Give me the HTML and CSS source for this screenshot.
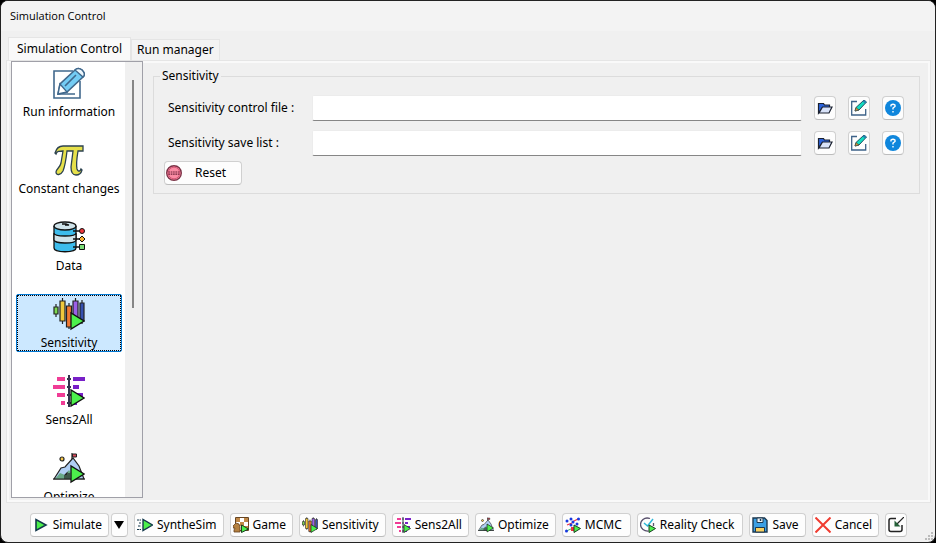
FILE: index.html
```html
<!DOCTYPE html>
<html lang="en">
<head>
    <meta charset="UTF-8">
    <meta name="viewport" content="width=device-width, initial-scale=1.0">
    <title>Simulation Control</title>
    <link rel="stylesheet" href="styles.css">
</head>
<body>

    <!-- Shared icons -->
    <svg class="sprite" aria-hidden="true">
        <symbol id="run-info" viewBox="0 0 32 32">
            <path d="M20 4H1v27h26V14" fill="none" stroke="#40688c" stroke-width="1.6"/>
            <path d="M5 27l2-10L22 3q3-3 7 0 4 4 1 7L14 25z" fill="#74ccf4" stroke="#40688c" stroke-width="1.6"/>
            <path d="M22 3q3-3 7 0 4 4 1 7z" fill="#eef7fc" stroke="#40688c" stroke-width="1.4"/>
            <path d="M5 27l2-10 7 8z" fill="#fff" stroke="#40688c" stroke-width="1.4"/>
            <path d="M12 19L23 8M5 27h17" fill="none" stroke="#40688c" stroke-width="1.6"/>
        </symbol>
        <symbol id="pi" viewBox="0 0 32 32">
            <path d="M2 9Q4 2 10 2h20v5h-5c-1 6-2 13-1 18 1 3 3 3 4 0l1 1c-1 4-4 5-6 5-5 0-5-5-5-8l2-16h-6c-1 9-2 15-4 20-2 4-7 5-7 1 0-3 4-4 5-9l2-12c-4 0-6 0-7 3z" fill="#e6e04a" stroke="#2c4250" stroke-width="1.3"/>
        </symbol>
        <symbol id="data" viewBox="0 0 32 32">
            <path d="M1 5v22c0 5 22 5 22 0V5" fill="#3dbcec" stroke="#111" stroke-width="1.3"/>
            <path d="M1 12c0 4 22 4 22 0v7c0 4-22 4-22 0z" fill="#cfe3ea" stroke="#111" stroke-width="1.3"/>
            <ellipse cx="12" cy="5" rx="11" ry="4" fill="#cfe3ea" stroke="#111" stroke-width="1.3"/>
            <path d="M9 3h4l3 1h-4M20 10h8M20 18h8M20 26h8" fill="none" stroke="#111" stroke-width="1.3"/>
            <circle cx="29" cy="10" r="2.5" fill="#f0383c" stroke="#111"/>
            <path d="M29 15l3 3-3 3-3-3z" fill="#f8b030" stroke="#111"/>
            <path d="M26.5 23.5h5v5h-5z" fill="#7bdc78" stroke="#111"/>
        </symbol>
        <symbol id="bars" viewBox="0 0 32 32">
            <g stroke="#222" stroke-width="1.2">
                <path d="M3 6v13M9.5 0v26M16 5v26M22.5 0v24M29 2v24"/>
                <path d="M1 9h4v7H1z" fill="#7cd850"/>
                <path d="M7 3h5v20H7z" fill="#f0c83c"/>
                <path d="M13.5 8h5v21h-5z" fill="#f07830"/>
                <path d="M20 3h5v19h-5z" fill="#9b60e8"/>
                <path d="M27 5h4v18h-4z" fill="#3450b0"/>
            </g>
            <path d="M18 15v16l13-8z" fill="#4cf04c" stroke="#111" stroke-width="1.3"/>
        </symbol>
        <symbol id="tornado" viewBox="0 0 32 32">
            <path d="M4 4h8M0 12h12M4 20h8M8 28h4" stroke="#f03c96" stroke-width="4"/>
            <path d="M20 4h12M20 12h6M20 20h10M20 28h4" stroke="#7820c8" stroke-width="4"/>
            <path d="M16 0v32M14 4h4M14 12h4M14 20h4M14 28h4" stroke="#34344c" stroke-width="2"/>
            <path d="M18 15v16l13-8z" fill="#4cf04c" stroke="#111" stroke-width="1.3"/>
        </symbol>
        <symbol id="mountain" viewBox="0 0 32 32">
            <path d="M1 27l7-11 4-1 8-9 6 8 5 13z" fill="#b0cef4" stroke="#222" stroke-width="1.2"/>
            <path d="M2 27l5-6 5 2 4-5 3 5 10 4z" fill="#68a888"/>
            <path d="M12 27v-4l2-2v6M16 27v-6M0 27h32M19 7V1" fill="none" stroke="#222" stroke-width="1.2"/>
            <path d="M19.5 2h4v3h-4z" fill="#d84858" stroke="#222"/>
            <circle cx="9" cy="7" r="2" fill="#f8c848" stroke="#222" stroke-width="1.2"/>
            <path d="M18 14v16l13-8z" fill="#4cf04c" stroke="#111" stroke-width="1.3"/>
        </symbol>
        <symbol id="folder" viewBox="0 0 16 16">
            <path d="M1.5 13V3.500h5l1 1.500h5v3H5z" fill="#2a62dc" stroke="#1c2230" stroke-width="1.2"/>
            <path d="M2 13l3.500-6H15l-3 6z" fill="#d8e2f8" stroke="#1c2230" stroke-width="1.2"/>
        </symbol>
        <symbol id="edit" viewBox="0 0 16 16">
            <path d="M6 1.5H.7V15h14V9" fill="none" stroke="#3c6288" stroke-width="1.3"/>
            <path d="M4 11l1-3.500L13 0l2.500 2L8 10z" fill="#10dcc0" stroke="#205060"/>
            <path d="M4 11l1-3.500L8 10z" fill="#c89838" stroke="#444" stroke-width=".6"/>
            <path d="M13 0l2.500 2-1.500 1.500-2.500-2z" fill="#2880b0"/>
        </symbol>
        <symbol id="help" viewBox="0 0 16 16">
            <circle cx="8" cy="8" r="8" fill="#0f86dc"/>
            <path d="M6 6.500V5q2-1.500 4 0v1.500L8 8v1.500M8 11v1.500" fill="none" stroke="#fff" stroke-width="1.4"/>
        </symbol>
        <symbol id="reset" viewBox="0 0 16 16">
            <circle cx="8" cy="8" r="7.3" fill="#fa8ca4" stroke="#7c3448" stroke-width="1.4"/>
            <circle cx="8" cy="8" r="5.8" fill="none" stroke="#d85878"/>
            <path d="M2.500 7h11M2.500 9.200h11" stroke="#6c2038" stroke-width="1.200" stroke-dasharray="1.600 .7"/>
        </symbol>
        <symbol id="play" viewBox="0 0 16 16">
            <path d="M3 2.5v11L13 8z" fill="#4cf04c" stroke="#14384c" stroke-width="1.6"/>
        </symbol>
        <symbol id="synthe" viewBox="0 0 16 16">
            <path d="M6 2.5v11L15.5 8z" fill="#4cf04c" stroke="#14384c" stroke-width="1.4"/>
            <path d="M0 3h4M2 6h2M1 9h3M0 12.500h4" stroke="#14384c" stroke-dasharray="2 .6"/>
        </symbol>
        <symbol id="game" viewBox="0 0 16 16">
            <path d="M2.5.5h13v13h-13z" fill="#fff" stroke="#674522"/>
            <path d="M3 1h4v4H3zM11 1h4v4h-4zM7 5h4v4H7zM11 9h4v4h-4z" fill="#c08848"/>
            <path d="M1 15v-2l1-2H0V9l3-3 3 1 1 3v5z" fill="#b48040" stroke="#624020" stroke-width=".8"/>
            <path d="M8.5 8v7.500l7-3.500z" fill="#4cf04c" stroke="#184020"/>
        </symbol>
        <symbol id="mcmc" viewBox="0 0 16 16">
            <path d="M1.5 14L8 11" stroke="#38c060"/>
            <path d="M7 5l6-3M2 8l5-2" stroke="#f03040" stroke-width="1.2"/>
            <path d="M6 10h4v4H6z" fill="#f03040"/>
            <g fill="#1838e0">
                <circle cx="2" cy="4" r="1.5"/><circle cx="6" cy="2" r="1.5"/>
                <circle cx="8" cy="5" r="1.5"/><circle cx="13.5" cy="2" r="1.5"/>
                <circle cx="6" cy="8" r="1.5"/><circle cx="12" cy="7" r="1.5"/>
                <circle cx="1.5" cy="14" r="1.5"/>
            </g>
            <path d="M9 8v7.500l6.500-4z" fill="#4cf04c" stroke="#184020"/>
        </symbol>
        <symbol id="check" viewBox="0 0 16 16">
            <path d="M10 1.500C4-.5.5 4 .5 7.500c0 4 4 7 8 6.500M13.500 6v3" fill="none" stroke="#58506c" stroke-width="1.3"/>
            <path d="M4 6l3.500 3L13 2" fill="none" stroke="#2cb8d8" stroke-width="1.5"/>
            <path d="M9 8v7.500l6.500-4z" fill="#4cf04c" stroke="#184020"/>
        </symbol>
        <symbol id="save" viewBox="0 0 16 16">
            <path d="M1 1h11.500L15 3.500V15H1z" fill="#3ca0e4" stroke="#1c3850" stroke-width="1.4"/>
            <path d="M5 1h6v4.500H5z" fill="#eef4f8" stroke="#1c3850"/>
            <path d="M8.500 2v2" stroke="#1c3850" stroke-width="1.5"/>
            <path d="M3.500 10.500h9V15h-9z" fill="#f8d060" stroke="#1c3850"/>
        </symbol>
        <symbol id="cancel" viewBox="0 0 16 16">
            <path d="M.5.5l15 15M15.500.5l-15 15" stroke="#f03c30" stroke-width="2"/>
        </symbol>
        <symbol id="shrink" viewBox="0 0 16 16">
            <path d="M8 1.500H3q-2 0-2 2v9q0 2 2 2h9q2 0 2-2V8" fill="none" stroke="#222" stroke-width="1.5"/>
            <path d="M16 0L9 7" stroke="#222" stroke-width="1.2"/>
            <path d="M6.500 3.500v6h6z" fill="#246038"/>
        </symbol>
    </svg>

    <div class="window">
        <header class="titlebar">Simulation Control</header>

        <div class="tabs" role="tablist">
            <button class="tab active" role="tab" aria-selected="true">Simulation Control</button>
            <button class="tab" role="tab" aria-selected="false">Run manager</button>
        </div>

        <main class="panel">
            <!-- Page list -->
            <div class="sidebar">
                <nav class="pages">
                    <button class="page"><svg><use href="#run-info"/></svg>Run information</button>
                    <button class="page"><svg><use href="#pi"/></svg>Constant changes</button>
                    <button class="page"><svg><use href="#data"/></svg>Data</button>
                    <button class="page selected"><svg><use href="#bars"/></svg>Sensitivity</button>
                    <button class="page"><svg><use href="#tornado"/></svg>Sens2All</button>
                    <button class="page"><svg><use href="#mountain"/></svg>Optimize</button>
                </nav>
                <div class="scrollbar"><div class="thumb"></div></div>
            </div>

            <!-- Sensitivity settings -->
            <fieldset class="group">
                <legend>Sensitivity</legend>
                <div class="row">
                    <label for="control-file">Sensitivity control file :</label>
                    <input type="text" id="control-file">
                    <button class="btn tool" aria-label="Open control file"><svg><use href="#folder"/></svg></button>
                    <button class="btn tool" aria-label="Edit control file"><svg><use href="#edit"/></svg></button>
                    <button class="btn tool" aria-label="Control file help"><svg><use href="#help"/></svg></button>
                </div>
                <div class="row">
                    <label for="save-list">Sensitivity save list :</label>
                    <input type="text" id="save-list">
                    <button class="btn tool" aria-label="Open save list"><svg><use href="#folder"/></svg></button>
                    <button class="btn tool" aria-label="Edit save list"><svg><use href="#edit"/></svg></button>
                    <button class="btn tool" aria-label="Save list help"><svg><use href="#help"/></svg></button>
                </div>
                <button class="btn reset"><svg><use href="#reset"/></svg>Reset</button>
            </fieldset>
        </main>

        <footer class="actions">
            <div class="split">
                <button class="btn"><svg><use href="#play"/></svg>Simulate</button>
                <button class="btn arrow" aria-label="Simulate options"><span class="caret"></span></button>
            </div>
            <button class="btn"><svg><use href="#synthe"/></svg>SyntheSim</button>
            <button class="btn"><svg><use href="#game"/></svg>Game</button>
            <button class="btn"><svg><use href="#bars"/></svg>Sensitivity</button>
            <button class="btn"><svg><use href="#tornado"/></svg>Sens2All</button>
            <button class="btn"><svg><use href="#mountain"/></svg>Optimize</button>
            <button class="btn wide"><svg><use href="#mcmc"/></svg>MCMC</button>
            <button class="btn wide"><svg><use href="#check"/></svg>Reality Check</button>
            <button class="btn"><svg><use href="#save"/></svg>Save</button>
            <button class="btn"><svg><use href="#cancel"/></svg>Cancel</button>
            <button class="btn tool" aria-label="Shrink window"><svg><use href="#shrink"/></svg></button>
        </footer>

        <svg class="grip" viewBox="0 0 10 10" aria-hidden="true">
            <path d="M6 0h2v2H6zM3 3h2v2H3zM6 3h2v2H6zM0 6h2v2H0zM3 6h2v2H3zM6 6h2v2H6z" fill="#bbb"/>
        </svg>
    </div>

</body>
</html>
```
FILE: styles.css
```css
* {
    box-sizing: border-box;
}

body {
    margin: 0;
    background: #000;
    color: #000;
    font: 12px/16px "Noto Sans", "Open Sans", sans-serif;
}

button,
input {
    font: inherit;
    color: inherit;
}

.sprite {
    display: none;
}

.window {
    position: relative;
    display: flex;
    flex-direction: column;
    height: 100vh;
    background: #f0f0f0;
    border: 1px solid #222;
    border-radius: 8px;
    overflow: hidden;
}

.titlebar {
    height: 30px;
    padding: 7px 9px;
    background: #f3f3f3;
    font-family: "Open Sans", sans-serif;
    font-size: 11px;
}

/* Tabs */
.tabs {
    display: flex;
    align-items: flex-end;
    height: 29px;
    padding-left: 7px;
}

.tab {
    height: 21px;
    padding: 0 5px;
    background: #f3f3f3;
    border: 1px solid #e5e5e5;
    border-bottom: none;
    white-space: nowrap;
}

.tab.active {
    height: 23px;
    padding: 0 8px;
    background: #f9f9f9;
}

.panel {
    display: flex;
    align-items: flex-start;
    gap: 10px;
    flex: 1;
    min-height: 0;
    margin: 0 4px 0 5px;
    padding: 0 10px 4px 4px;
    border: 1px solid #e5e5e5;
    box-shadow: inset 0 0 0 2px #f9f9f9;
}

/* Page list */
.sidebar {
    display: flex;
    align-self: stretch;
    width: 132px;
    background: #fff;
    border: 1px solid #a0a0a8;
}

.pages {
    display: flex;
    flex-direction: column;
    flex: 1;
    gap: 19px;
    padding: 1px 3px 0 4px;
    overflow: hidden;
}

.page {
    display: flex;
    flex-direction: column;
    align-items: center;
    flex: none;
    gap: 4px;
    height: 58px;
    padding: 2px 0 0;
    background: none;
    border: 1px solid transparent;
    border-radius: 2px;
    white-space: nowrap;
}

.page svg {
    width: 32px;
    height: 34px;
}

.page.selected {
    background: #cce8ff;
    border-color: #0078d4;
    outline: 1px dotted #000;
    outline-offset: -2px;
}

.scrollbar {
    width: 17px;
    padding: 18px 7px 0;
    background: #f0f0f0;
}

.thumb {
    width: 2px;
    height: 228px;
    background: #868686;
}

/* Group box */
.group {
    flex: 1;
    min-width: 0;
    margin: 7px 0 0;
    padding: 11px 15px 8px 10px;
    border: 1px solid #dcdcdc;
}

.group legend {
    margin-left: -4px;
    padding: 0 2px;
}

.row {
    display: flex;
    align-items: center;
    gap: 12px;
    margin-bottom: 9px;
}

.row + .row {
    margin-bottom: 5px;
}

.row label {
    flex: none;
    width: 136px;
    padding-left: 4px;
}

.row input {
    flex: 1;
    min-width: 0;
    height: 26px;
    padding: 2px 4px;
    background: #fff;
    border: 1px solid #ececec;
    border-bottom-color: #868686;
    border-radius: 2px;
}

/* Push buttons */
.btn {
    display: flex;
    align-items: center;
    flex: none;
    gap: 4px;
    height: 24px;
    padding: 0 6px 0 2px;
    background: #fdfdfd;
    border: 1px solid #d0d0d0;
    border-bottom-color: #bcbcbc;
    border-radius: 4px;
    white-space: nowrap;
}

.btn svg {
    width: 16px;
    height: 16px;
}

.btn.tool {
    justify-content: center;
    width: 22px;
    padding: 0;
}

.btn.wide {
    padding-right: 8px;
}

.btn.reset {
    gap: 13px;
    padding: 0 15px 0 1px;
}

/* Bottom bar */
.actions {
    display: flex;
    justify-content: flex-end;
    gap: 6px;
    padding: 10px 28px 5px;
}

.split {
    display: flex;
    gap: 2px;
}

.btn.arrow {
    justify-content: center;
    width: 17px;
    padding: 0;
}

.caret {
    border: 5px solid transparent;
    border-top: 8px solid #000;
    border-bottom: none;
}

.grip {
    position: absolute;
    right: 0;
    bottom: 0;
    width: 10px;
    height: 10px;
}
```
